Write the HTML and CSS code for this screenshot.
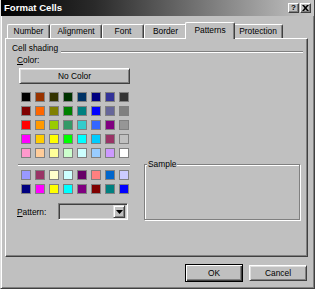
FILE: index.html
```html
<!DOCTYPE html>
<html>
<head>
<meta charset="utf-8">
<link rel="stylesheet" href="styles.css">
</head>
<body>
<div class="window">
  <div class="titlebar">
    <span class="title">Format Cells</span>
    <div class="tbtns">
      <span class="tbtn help">?</span>
      <span class="tbtn close"><svg width="7" height="6" viewBox="0 0 7 6"><path d="M0 0h2l1.5 1.8L5 0h2L4.5 3 7 6H5L3.5 4.2 2 6H0l2.5-3z" fill="#000"/></svg></span>
    </div>
  </div>
  <div class="content">
    <div class="tabs">
      <div class="tab t-number">Number</div>
      <div class="tab t-align">Alignment</div>
      <div class="tab t-font">Font</div>
      <div class="tab t-border">Border</div>
      <div class="tab t-patterns active">Patterns</div>
      <div class="tab t-protect">Protection</div>
    </div>
    <div class="panel">
      <div class="group-head"><span>Cell shading</span><span class="rule"></span></div>
      <div class="cols">
        <div class="left">
          <div class="lbl"><u>C</u>olor:</div>
          <div class="nocolor">No Color</div>
          <div class="grid">
            <span class="sw" style="background:#000000"></span><span class="sw" style="background:#993300"></span><span class="sw" style="background:#333300"></span><span class="sw" style="background:#003300"></span><span class="sw" style="background:#003366"></span><span class="sw" style="background:#000080"></span><span class="sw" style="background:#333399"></span><span class="sw" style="background:#333333"></span>
            <span class="sw" style="background:#800000"></span><span class="sw" style="background:#ff6600"></span><span class="sw" style="background:#808000"></span><span class="sw" style="background:#008000"></span><span class="sw" style="background:#008080"></span><span class="sw" style="background:#0000ff"></span><span class="sw" style="background:#666699"></span><span class="sw" style="background:#808080"></span>
            <span class="sw" style="background:#ff0000"></span><span class="sw" style="background:#ff9900"></span><span class="sw" style="background:#99cc00"></span><span class="sw" style="background:#339966"></span><span class="sw" style="background:#33cccc"></span><span class="sw" style="background:#3366ff"></span><span class="sw" style="background:#800080"></span><span class="sw" style="background:#969696"></span>
            <span class="sw" style="background:#ff00ff"></span><span class="sw" style="background:#ffcc00"></span><span class="sw" style="background:#ffff00"></span><span class="sw" style="background:#00ff00"></span><span class="sw" style="background:#00ffff"></span><span class="sw" style="background:#00ccff"></span><span class="sw" style="background:#993366"></span><span class="sw" style="background:#c0c0c0"></span>
            <span class="sw" style="background:#ff99cc"></span><span class="sw" style="background:#ffcc99"></span><span class="sw" style="background:#ffff99"></span><span class="sw" style="background:#ccffcc"></span><span class="sw" style="background:#ccffff"></span><span class="sw" style="background:#99ccff"></span><span class="sw" style="background:#cc99ff"></span><span class="sw" style="background:#ffffff"></span>
          </div>
          <div class="sep"></div>
          <div class="grid grid2">
            <span class="sw" style="background:#9999ff"></span><span class="sw" style="background:#993366"></span><span class="sw" style="background:#ffffcc"></span><span class="sw" style="background:#ccffff"></span><span class="sw" style="background:#660066"></span><span class="sw" style="background:#ff8080"></span><span class="sw" style="background:#0066cc"></span><span class="sw" style="background:#ccccff"></span>
            <span class="sw" style="background:#000080"></span><span class="sw" style="background:#ff00ff"></span><span class="sw" style="background:#ffff00"></span><span class="sw" style="background:#00ffff"></span><span class="sw" style="background:#800080"></span><span class="sw" style="background:#800000"></span><span class="sw" style="background:#008080"></span><span class="sw" style="background:#0000ff"></span>
          </div>
          <div class="pattern-row">
            <span class="plabel"><u>P</u>attern:</span>
            <div class="combo"><span class="drop"><svg width="7" height="4" viewBox="0 0 7 4"><path d="M0 0h7L3.5 4z" fill="#000"/></svg></span></div>
          </div>
        </div>
        <div class="sample">
          <span class="legend">Sample</span>
        </div>
      </div>
    </div>
    <div class="buttons">
      <div class="btn default">OK</div>
      <div class="btn">Cancel</div>
    </div>
  </div>
</div>
</body>
</html>
```
FILE: styles.css
```css
* { box-sizing: border-box; }
html, body { margin: 0; padding: 0; }
body {
  background: #c0c0c0;
  font-family: "Liberation Sans", Arial, sans-serif;
  font-size: 8.4px;
  color: #000;
  width: 315px;
  height: 289px;
  overflow: hidden;
}
.window {
  width: 315px;
  height: 289px;
  background: #c0c0c0;
  border-left: 1px solid #dfdfdf;
  border-right: 1px solid #404040;
  border-bottom: 1px solid #404040;
  box-shadow: inset 1px 0 #fff, inset -1px -1px #808080;
  display: flex;
  flex-direction: column;
}
.titlebar {
  flex: none;
  height: 16px;
  background: linear-gradient(to right, #000 0%, #2a2a2a 30%, #c6c6c6 100%);
  display: flex;
  align-items: center;
  padding: 0 3px 0 3px;
}
.title {
  flex: 1;
  color: #fff;
  font-weight: bold;
  font-size: 9.6px;
  line-height: 12px;
}
.tbtns { display: flex; gap: 1px; }
.tbtn {
  width: 11px;
  height: 10px;
  background: #c0c0c0;
  border: 1px solid;
  border-color: #fff #404040 #404040 #fff;
  box-shadow: inset -1px -1px #808080;
  display: flex;
  align-items: center;
  justify-content: center;
  font-weight: bold;
  font-size: 8px;
  line-height: 8px;
}
.content {
  flex: 1;
  display: flex;
  flex-direction: column;
  padding: 6px 6px 0 4px;
}
.tabs {
  flex: none;
  display: flex;
  align-items: flex-end;
  height: 16px;
  padding-left: 2px;
}
.tab {
  height: 14px;
  border-top: 1px solid #fff;
  border-left: 1px solid #fff;
  border-right: 1px solid #404040;
  border-radius: 2px 2px 0 0;
  box-shadow: inset -1px 0 #808080;
  text-align: center;
  line-height: 12px;
  background: #c0c0c0;
}
.t-number { width: 43px; }
.t-align { width: 52px; }
.t-font { width: 42px; }
.t-border { width: 43px; }
.t-patterns { width: 50px; }
.t-protect { width: 50px; }
.tab.active {
  position: relative;
  z-index: 1;
  height: 17px;
  margin: 0 -2px -1px -2px;
  padding-top: 1px;
}
.panel {
  flex: none;
  height: 219px;
  border: 1px solid;
  border-color: #fff #404040 #404040 #fff;
  box-shadow: inset -1px -1px #808080;
  padding: 4px 0 0 6px;
}
.group-head {
  display: flex;
  align-items: flex-start;
  height: 10px;
  line-height: 10px;
}
.rule {
  flex: 1;
  height: 2px;
  margin: 8px 4px 0 3px;
  border-top: 1px solid #808080;
  border-bottom: 1px solid #fff;
}
.cols {
  display: flex;
  align-items: flex-end;
}
.left {
  width: 119px;
  padding-left: 5px;
  display: flex;
  flex-direction: column;
}
.lbl {
  margin-top: 2px;
  line-height: 10px;
  height: 10px;
}
.nocolor {
  margin: 3px 0 0 2px;
  width: 111px;
  height: 16px;
  border: 1px solid;
  border-color: #fff #404040 #404040 #fff;
  box-shadow: inset 1px 1px #dfdfdf, inset -1px -1px #808080;
  text-align: center;
  line-height: 14px;
}
.grid {
  margin: 8px 0 0 4px;
  display: grid;
  grid-template-columns: repeat(8, 10px);
  grid-auto-rows: 10px;
  gap: 4px;
}
.grid2 { margin-top: 4px; }
.sw {
  display: block;
  width: 10px;
  height: 10px;
  border: 1px solid #808080;
}
.sep {
  margin: 6px 0 0 1px;
  width: 112px;
  height: 2px;
  border-top: 1px solid #808080;
  border-bottom: 1px solid #fff;
}
.pattern-row {
  margin-top: 9px;
  display: flex;
  align-items: center;
  height: 17px;
}
.plabel {
  width: 41px;
  line-height: 10px;
}
.combo {
  width: 70px;
  height: 17px;
  border: 1px solid;
  border-color: #808080 #fff #fff #808080;
  box-shadow: inset 1px 1px #404040, inset -1px -1px #dfdfdf;
  display: flex;
  justify-content: flex-end;
  align-items: center;
  padding-right: 2px;
}
.drop {
  width: 12px;
  height: 13px;
  background: #c0c0c0;
  border: 1px solid;
  border-color: #dfdfdf #404040 #404040 #dfdfdf;
  box-shadow: inset 1px 1px #fff, inset -1px -1px #808080;
  display: flex;
  align-items: center;
  justify-content: center;
}
.sample {
  margin-left: 13px;
  width: 156px;
  height: 56px;
  border: 1px solid #808080;
  box-shadow: 1px 1px 0 #fff, inset 1px 1px 0 #fff;
  padding-left: 2px;
  line-height: 10px;
}
.legend {
  display: inline-block;
  margin-top: -6px;
  background: #c0c0c0;
  padding: 0 1px;
  vertical-align: top;
}
.buttons {
  flex: none;
  margin-top: 7px;
  display: flex;
  justify-content: flex-end;
  align-items: center;
  gap: 6px;
  padding-right: 1px;
  height: 18px;
}
.btn {
  width: 58px;
  height: 16px;
  border: 1px solid;
  border-color: #fff #404040 #404040 #fff;
  box-shadow: inset 1px 1px #dfdfdf, inset -1px -1px #808080;
  text-align: center;
  line-height: 14px;
}
.btn.default {
  height: 18px;
  border: 1px solid #000;
  box-shadow: inset 1px 1px #fff, inset -1px -1px #404040, inset -2px -2px #808080;
  line-height: 16px;
}
```
